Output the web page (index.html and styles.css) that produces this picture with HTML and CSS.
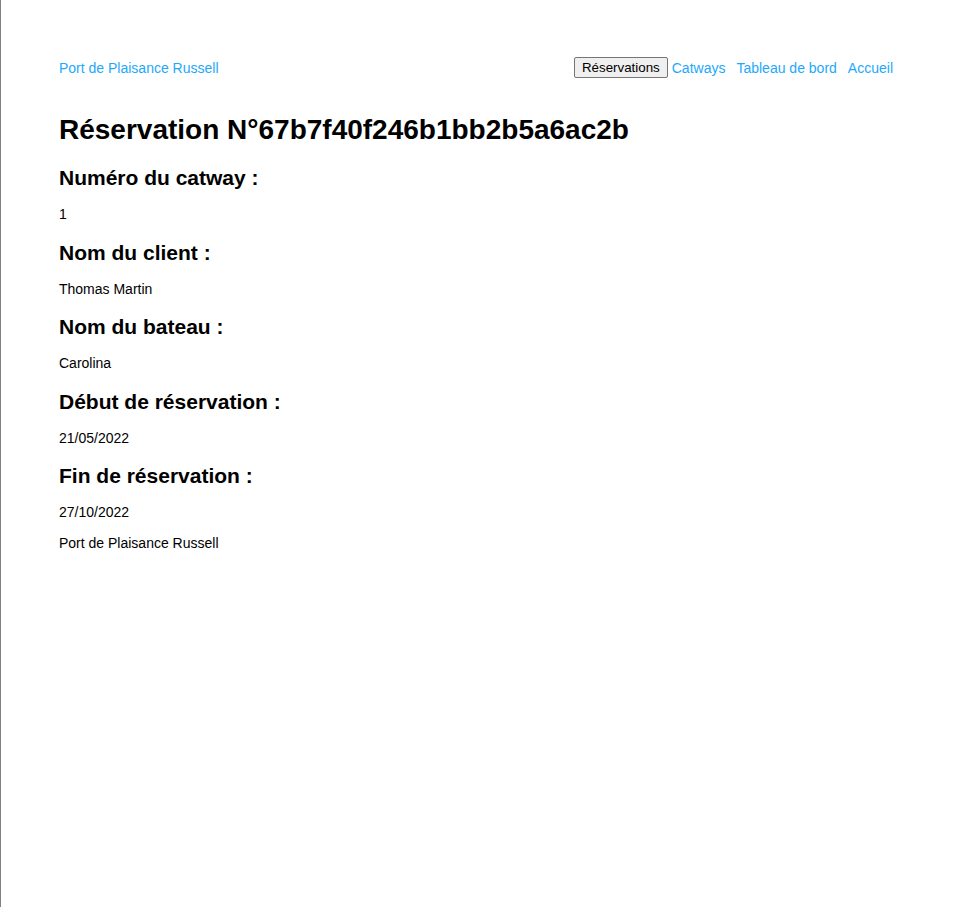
FILE: index.html
```html
<!DOCTYPE html>
<html lang="fr">
<head>
<meta charset="utf-8">
<title>Réservation</title>
<link rel="stylesheet" href="styles.css">
</head>
<body>
<div class="page">
  <header class="topbar">
    <a class="brand" href="#">Port de Plaisance Russell</a>
    <nav class="menu">
      <button class="menu-btn" type="button">Réservations</button>
      <a class="menu-link first" href="#">Catways</a>
      <a class="menu-link" href="#">Tableau de bord</a>
      <a class="menu-link" href="#">Accueil</a>
    </nav>
  </header>
  <main class="content">
    <h1 class="title">Réservation N°67b7f40f246b1bb2b5a6ac2b</h1>
    <h2 class="label">Numéro du catway :</h2>
    <p class="value">1</p>
    <h2 class="label">Nom du client :</h2>
    <p class="value">Thomas Martin</p>
    <h2 class="label">Nom du bateau :</h2>
    <p class="value">Carolina</p>
    <h2 class="label">Début de réservation :</h2>
    <p class="value">21/05/2022</p>
    <h2 class="label">Fin de réservation :</h2>
    <p class="value">27/10/2022</p>
  </main>
  <footer class="footer">Port de Plaisance Russell</footer>
</div>
</body>
</html>
```

FILE: styles.css
```css
html, body {
  margin: 0;
  padding: 0;
  background: #ffffff;
}
body {
  font-family: Arial, "Liberation Sans", sans-serif;
  color: #000000;
  border-left: 1px solid #808080;
  min-height: 907px;
  box-sizing: border-box;
}
.page {
  padding: 57px 66px 0 58px;
}
.topbar {
  display: flex;
  justify-content: space-between;
  align-items: center;
  height: 21px;
}
.brand, .menu-link {
  color: #1ea8fb;
  text-decoration: none;
  font-size: 14px;
}
.menu {
  display: flex;
  align-items: center;
  gap: 11px;
}
.menu-btn {
  font-family: Arial, "Liberation Sans", sans-serif;
  font-size: 13.33px;
  color: #000;
  background: #efefef;
  border: 1px solid #767676;
  border-radius: 2px;
  padding: 1px 7px;
  height: 21px;
  margin-right: -7px;
}
.title {
  font-size: 28px;
  line-height: 32px;
  font-weight: bold;
  margin: 36px 0 20px;
}
.label {
  font-size: 21px;
  line-height: 24px;
  font-weight: bold;
  margin: 18.5px 0 0;
}
.value {
  font-size: 14px;
  line-height: 16px;
  margin: 16px 0 0;
}
.footer {
  font-size: 14px;
  line-height: 16px;
  margin-top: 15px;
}
```
